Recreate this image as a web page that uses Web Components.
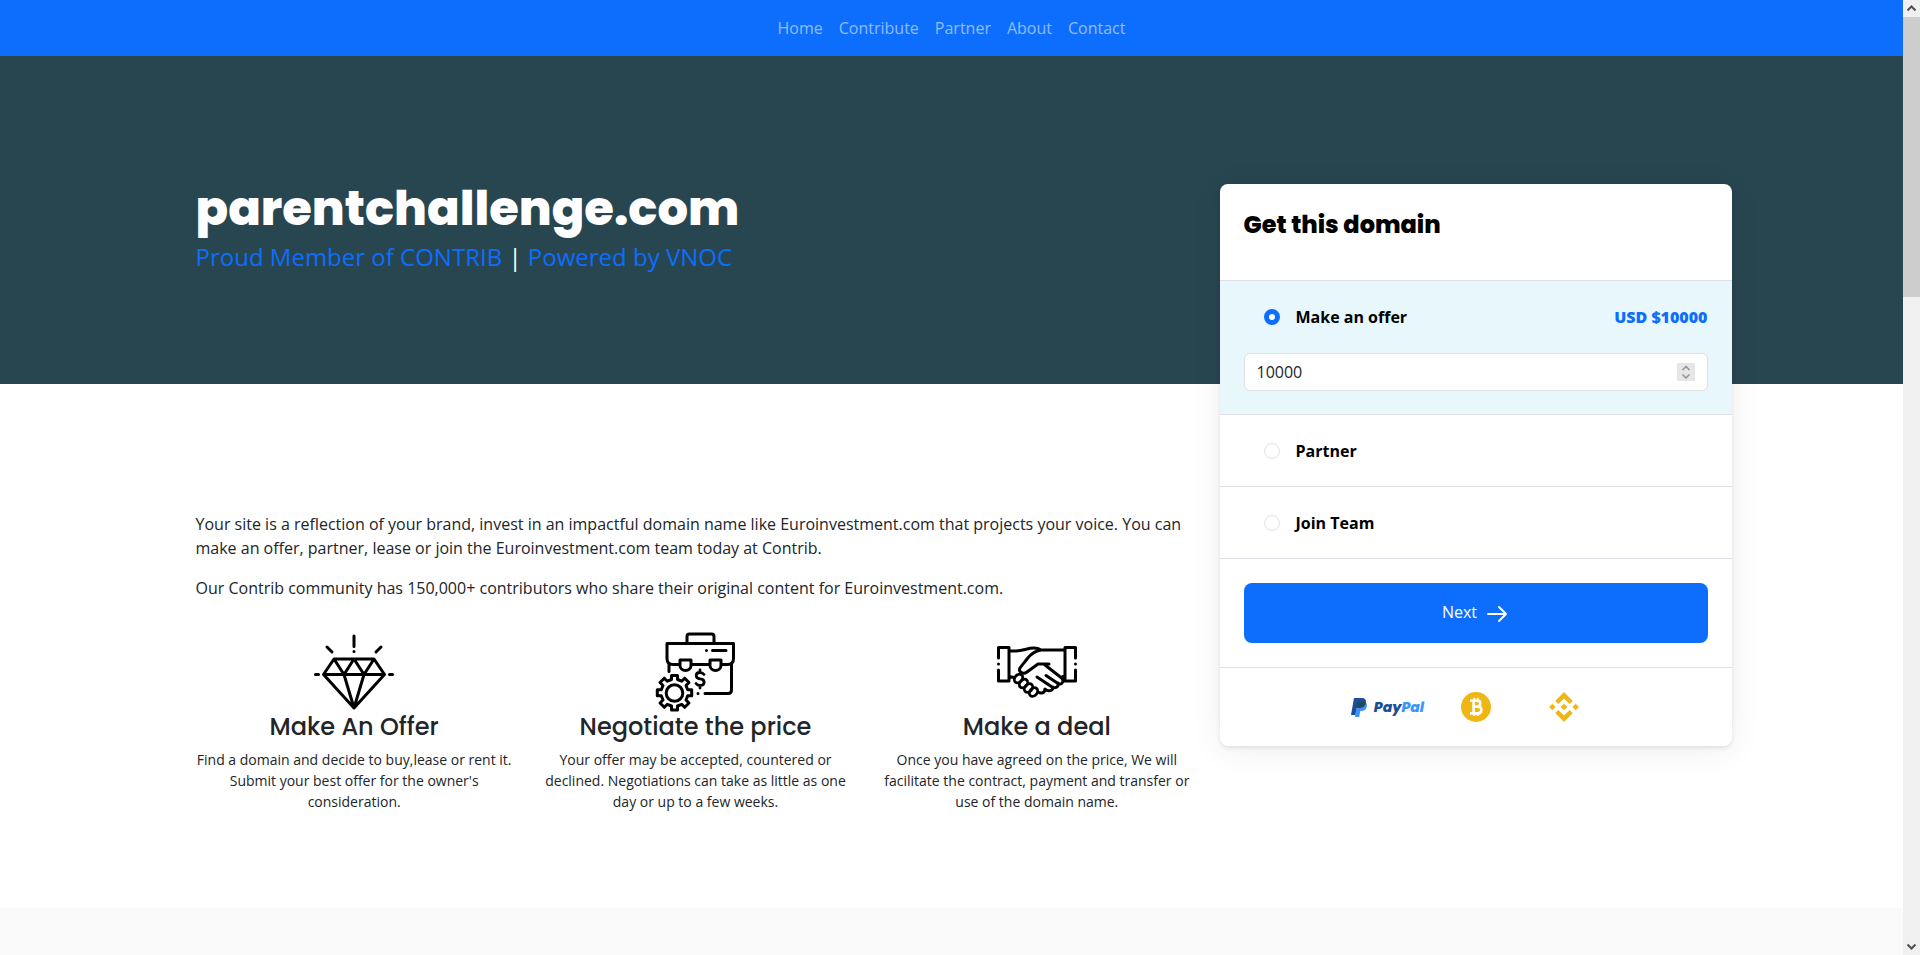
<!DOCTYPE html>
<html lang="en">
<head>
<meta charset="utf-8">
<meta name="viewport" content="width=device-width, initial-scale=1">
<title>parentchallenge.com</title>
<style>
  body{margin:0;min-height:100vh;display:flex;background:#fff;color:#212529;
    font:400 16px/24px 'Open Sans',sans-serif;
    --blue:#0d6efd;--line:#dee2e6;--teal:#284650;--display:'Poppins','Inter',sans-serif}
</style>
</head>
<body>
<domain-page></domain-page>
<page-scroll></page-scroll>

<script>
(function () {
  function define(name, css, html) {
    customElements.define(name, class extends HTMLElement {
      connectedCallback() {
        if (this.shadowRoot) return;
        var root = this.attachShadow({ mode: 'open' });
        root.innerHTML = '<style>*{box-sizing:border-box}' + css + '</style>' + html;
      }
    });
  }

  /* top navigation */
  define('site-nav', `
    :host{display:block;background:var(--blue)}
    nav{display:flex;justify-content:center;padding:8px 12px}
    a{padding:8px;color:rgba(255,255,255,.55);text-decoration:none}
    a:hover{color:rgba(255,255,255,.75)}`, `
    <nav aria-label="Main">
      <a href="#home">Home</a><a href="#contribute">Contribute</a><a href="#partner">Partner</a><a href="#about">About</a><a href="#contact">Contact</a>
    </nav>`);

  define('site-hero', `
    :host{display:block;background:var(--teal);color:#fff}
    .inner{max-width:1560px;margin:0 auto;padding:123px 24px 109px}
    h1{margin:0;font:800 48px/60px var(--display)}
    p{margin:0;font-size:24px;line-height:36px}
    ::slotted(a){color:var(--blue);text-decoration:none}`, `
    <div class="inner">
      <h1><slot name="title"></slot></h1>
      <p><slot></slot></p>
    </div>`);

  /* one step of the process: drawing, heading, copy */
  define('step-card', `
    :host{display:block;text-align:center}
    ::slotted(svg){display:block;width:80px;height:80px;margin:0 auto}
    h2{margin:0 0 8px;font:500 24px/29px var(--display)}
    p{margin:0;font-size:14px;line-height:21px}`, `
    <slot name="icon"></slot>
    <h2><slot name="title"></slot></h2>
    <p><slot></slot></p>`);

  /* payment marks under the form */
  define('pay-marks', `
    :host{display:flex;justify-content:center}
    div{width:88px;height:30px;display:flex;align-items:center;justify-content:center}
    .paypal{gap:6px;font:italic 800 14px/20px var(--display);color:#1b4f94}
    .paypal b{font-weight:inherit;color:#3a96fc}
    svg{display:block;flex:none}`, `
    <div class="paypal">
      <svg width="17" height="19" viewBox="0 0 17 19" aria-hidden="true">
        <path fill="#3a93fb" d="M14.6 4.4c1.2.8 1.6 2.2 1.2 4.1-.7 3.2-2.7 4.500-5.700 4.500H9.200L8.300 19H4l.5-3L6 6z"/>
        <path fill="#1b4f94" d="M3 0h7.500c3.300 0 5 1.700 4.400 4.800-.7 3.500-2.900 5-6.400 5H6.300c-.5 0-.8.3-.9.7L4.400 17H0z"/>
        <path fill="#29475c" d="M8.500 3.700h4.200c.8 0 1.500.2 2.100.7-.6 3.500-2.900 5.400-6.300 5.400H6.300c-.3 0-.5.1-.7.3l.8-4.800c.2-1 1-1.600 2.100-1.600z"/>
      </svg>
      <span>Pay<b>Pal</b></span>
    </div>
    <div>
      <svg width="30" height="30" viewBox="0 0 30 30" role="img" aria-label="Bitcoin">
        <circle cx="15" cy="15" r="15" fill="#efb716"/>
        <g fill="none" stroke="#fff" stroke-width="2.6">
          <path d="M9 8.600h7.300c4 0 4 6 0 6h-3.300h4c4.500 0 4.500 6.800 0 6.800H9M12.600 8v14"/>
          <path stroke-width="1.800" d="M13.300 5.800v2.600M16.800 5.800v2.600M13.300 21.400V24M16.800 21.400V24"/>
        </g>
      </svg>
    </div>
    <div>
      <svg width="30" height="30" viewBox="0 0 30 30" role="img" aria-label="Binance">
        <path fill="#efb716" d="M15 0l8.800 8.900-3.200 3.200L15 6.400l-5.600 5.700-3.200-3.200zM3.300 11.700L6.600 15l-3.300 3.300L0 15zM15 11.700l3.300 3.300-3.300 3.300-3.300-3.300zM26.700 11.700L30 15l-3.300 3.300-3.300-3.300zM9.400 17.900l5.600 5.700 5.600-5.700 3.200 3.200L15 30l-8.800-8.900z"/>
      </svg>
    </div>`);

  define('offer-form', `
    :host{display:block;background:#fff;color:#000;border-radius:8px;overflow:hidden;
      box-shadow:0 4px 32px rgba(0,0,0,.07),0 2px 4px rgba(0,0,0,.09)}
    form > *{border-bottom:1px solid var(--line);padding:24px}
    form > :last-child{border-bottom:0}
    form > .option{padding-bottom:23px}
    header{height:97px}
    h2{margin:0;font:800 24px/34px var(--display)}
    .on{background:#e8f7fc}
    .choice{display:flex;align-items:center;padding-left:20px;font-weight:700}
    input[type=radio]{appearance:none;width:16px;height:16px;margin:0 16px 0 0;border:1px solid var(--line);border-radius:50%;background:#fff}
    input[type=radio]:checked{border:5px solid var(--blue)}
    label{display:flex;align-items:center;cursor:pointer}
    output{margin-left:auto;color:var(--blue);font-weight:800}
    .amount{display:flex;align-items:center;margin-top:24px;padding:6px 12px;background:#fff;border:1px solid var(--line);border-radius:6px}
    .amount input{flex:1;min-width:0;height:24px;padding:0;border:0;outline:0;background:none;color:#212529;font:inherit;appearance:textfield}
    .amount input::-webkit-inner-spin-button{display:none}
    button{display:flex;align-items:center;justify-content:center;gap:10px;width:100%;height:60px;padding:0 0 2px;
      border:0;border-radius:8px;background:var(--blue);color:#fff;font:inherit;cursor:pointer}
    button svg{margin-top:4px}`, `
    <form>
      <header><h2>Get this domain</h2></header>
      <div class="option on">
        <div class="choice"><label><input type="radio" name="kind" value="offer" checked>Make an offer</label><output>USD $10000</output></div>
        <div class="amount">
          <input type="number" value="10000" aria-label="Offer amount">
          <svg width="18" height="18" viewBox="0 0 18 18" aria-hidden="true"><path fill="#e6e6e6" d="M0 0h18v18H0z"/><path d="M5.500 7L9 3.500 12.500 7M5.500 11.500L9 15l3.500-3.500" fill="none" stroke="#8b9396" stroke-width="1.500"/></svg>
        </div>
      </div>
      <div class="option"><div class="choice"><label><input type="radio" name="kind" value="partner">Partner</label></div></div>
      <div class="option"><div class="choice"><label><input type="radio" name="kind" value="team">Join Team</label></div></div>
      <div>
        <button type="button">Next
          <svg width="22" height="18" viewBox="0 0 22 18" fill="none" stroke="#fff" stroke-width="2" stroke-linecap="round" stroke-linejoin="round" aria-hidden="true"><path d="M1 9h18M12 2l7 7-7 7"/></svg>
        </button>
      </div>
      <div><pay-marks></pay-marks></div>
    </form>`);

  define('domain-page', `
    :host{display:flex;flex-direction:column;flex:1;min-width:0}
    .body{width:100%;max-width:1560px;margin:0 auto;padding:0 0 96px 24px;box-sizing:border-box;
      display:grid;grid-template-columns:minmax(0,1fr) 512px;gap:24px;align-items:start}
    .copy{padding-top:128px}
    .copy > p{margin:0 0 16px}
    .steps{display:grid;grid-template-columns:repeat(3,1fr);gap:24px;padding-top:16px}
    /* the form rides up over the hero */
    offer-form{margin:-200px 0 0}
    .next{flex:1;background:#fafafa}
    svg{fill:none;stroke:#000;stroke-width:3;stroke-linecap:round;stroke-linejoin:round}
    @media (max-width:1100px){.body{grid-template-columns:1fr;padding:0 24px 96px}offer-form{order:-1;margin-top:-48px}.copy{padding-top:24px}}`, `
    <site-nav></site-nav>
    <site-hero>
      <span slot="title">parentchallenge.com</span>
      <a href="#contrib">Proud Member of CONTRIB</a> | <a href="#vnoc">Powered by VNOC</a>
    </site-hero>
    <main class="body">
      <div class="copy">
        <p>Your site is a reflection of your brand, invest in an impactful domain name like Euroinvestment.com that projects your voice. You can make an offer, partner, lease or join the Euroinvestment.com team today at Contrib.</p>
        <p>Our Contrib community has 150,000+ contributors who share their original content for Euroinvestment.com.</p>
        <div class="steps">
          <step-card>
            <svg slot="icon" viewBox="0 0 80 80" aria-hidden="true">
              <path d="M20 27h40l10.500 15.500L40 76 9.500 42.500zM9.500 42.500h61M20 27l10 15.500L40 27l10 15.500L60 27M30 42.500L40 76l10-33.500M40 4v10.500M40 19.500v.1M13 15l5 5M67 15l-5 5M1.500 42.500h3M75.500 42.500h3"/>
            </svg>
            <span slot="title">Make An Offer</span>
            Find a domain and decide to buy,lease or rent it. Submit your best offer for the owner's consideration.
          </step-card>
          <step-card>
            <svg slot="icon" viewBox="0 0 80 80" aria-hidden="true">
              <path d="M32 11V4.500q0-2.500 2.500-2.500h22Q59 2 59 4.500V11M25 32.500h-7q-6 0-6-6v-15h66.500v15q0 6-6 6H66M55 32.500H36M14 32v7.500M76.500 32v26q0 3.500-3.500 3.500H50M43 61.500v.1M51.500 18.500v.1M57.500 18.500H71M25 28h11v5.500c0 6.500-11 6.500-11 0zM55 28h11v5.500c0 6.500-11 6.500-11 0z"/>
              <path stroke-width="2.800" d="M49 42.500q-1.500-2-4-2c-5 0-5 6 0 6.300 5.500.3 5.500 6.700 0 6.700q-2.500 0-4-2M45 38v2.500M45 53.500V56"/>
              <circle cx="19.500" cy="61" r="8.300"/>
              <path d="M16.500 43.500h6v4l4.200 1.700 3-3 4.300 4.300-3 3 1.700 4.200h4v6h-4L31 68l3 3-4.300 4.300-3-3-4.200 1.700v4h-6v-4l-4.200-1.700-3 3L5 71l3-3-1.700-4.200h-4v-6h4L8 53.500l-3-3 4.300-4.300 3 3 4.200-1.700z"/>
            </svg>
            <span slot="title">Negotiate the price</span>
            Your offer may be accepted, countered or declined. Negotiations can take as little as one day or up to a few weeks.
          </step-card>
          <step-card>
            <svg slot="icon" viewBox="0 0 80 80" aria-hidden="true">
              <path d="M1.500 26V15.500h10.500V49H1.500V38M1.500 32v.1M78.500 26V15.500H68V49h10.500V38M78.500 32v.1M12 19h6c8 0 12-3 19-3q4 0 7 2h24M44 18c-7 1-11 5-14 9-3 4-5 6-7 9-2 4 3 7 7 4l11-8h11M48 33l16 12.500c4 3 1 8-3 6L49 43.500M61 51c1 4-3 6-6 4L40 45M56 55c0 4-5 5-8 2M48 57c0 4-4 5-7 3M68 43.500l-4 2M12 44.500l5 1"/>
              <g stroke-width="2.800">
                <ellipse cx="21.500" cy="46.500" rx="3.600" ry="4.800" transform="rotate(40 21.500 46.500)"/>
                <ellipse cx="26.500" cy="51.500" rx="3.600" ry="4.800" transform="rotate(40 26.500 51.500)"/>
                <ellipse cx="31.500" cy="56" rx="3.600" ry="4.800" transform="rotate(40 31.500 56)"/>
                <ellipse cx="36.500" cy="60" rx="3.600" ry="4.800" transform="rotate(40 36.500 60)"/>
              </g>
            </svg>
            <span slot="title">Make a deal</span>
            Once you have agreed on the price, We will facilitate the contract, payment and transfer or use of the domain name.
          </step-card>
        </div>
      </div>
      <offer-form></offer-form>
    </main>
    <section class="next"></section>`);

  /* vertical scroll rail along the window edge */
  define('page-scroll', `
    :host{display:flex;flex-direction:column;flex:none;position:sticky;top:0;width:17px;height:100vh;background:#f0f0f0}
    svg{display:block;flex:none;fill:none;stroke:#505050;stroke-width:2}
    .track{flex:1}
    .thumb{height:30.4%;background:#cdcdcd}`, `
    <svg width="17" height="17" viewBox="0 0 17 17" aria-hidden="true"><path d="M4.500 10.500l4-4 4 4"/></svg>
    <div class="track"><div class="thumb"></div></div>
    <svg width="17" height="17" viewBox="0 0 17 17" aria-hidden="true"><path d="M4.500 6.500l4 4 4-4"/></svg>`);
})();
</script>
</body>
</html>
